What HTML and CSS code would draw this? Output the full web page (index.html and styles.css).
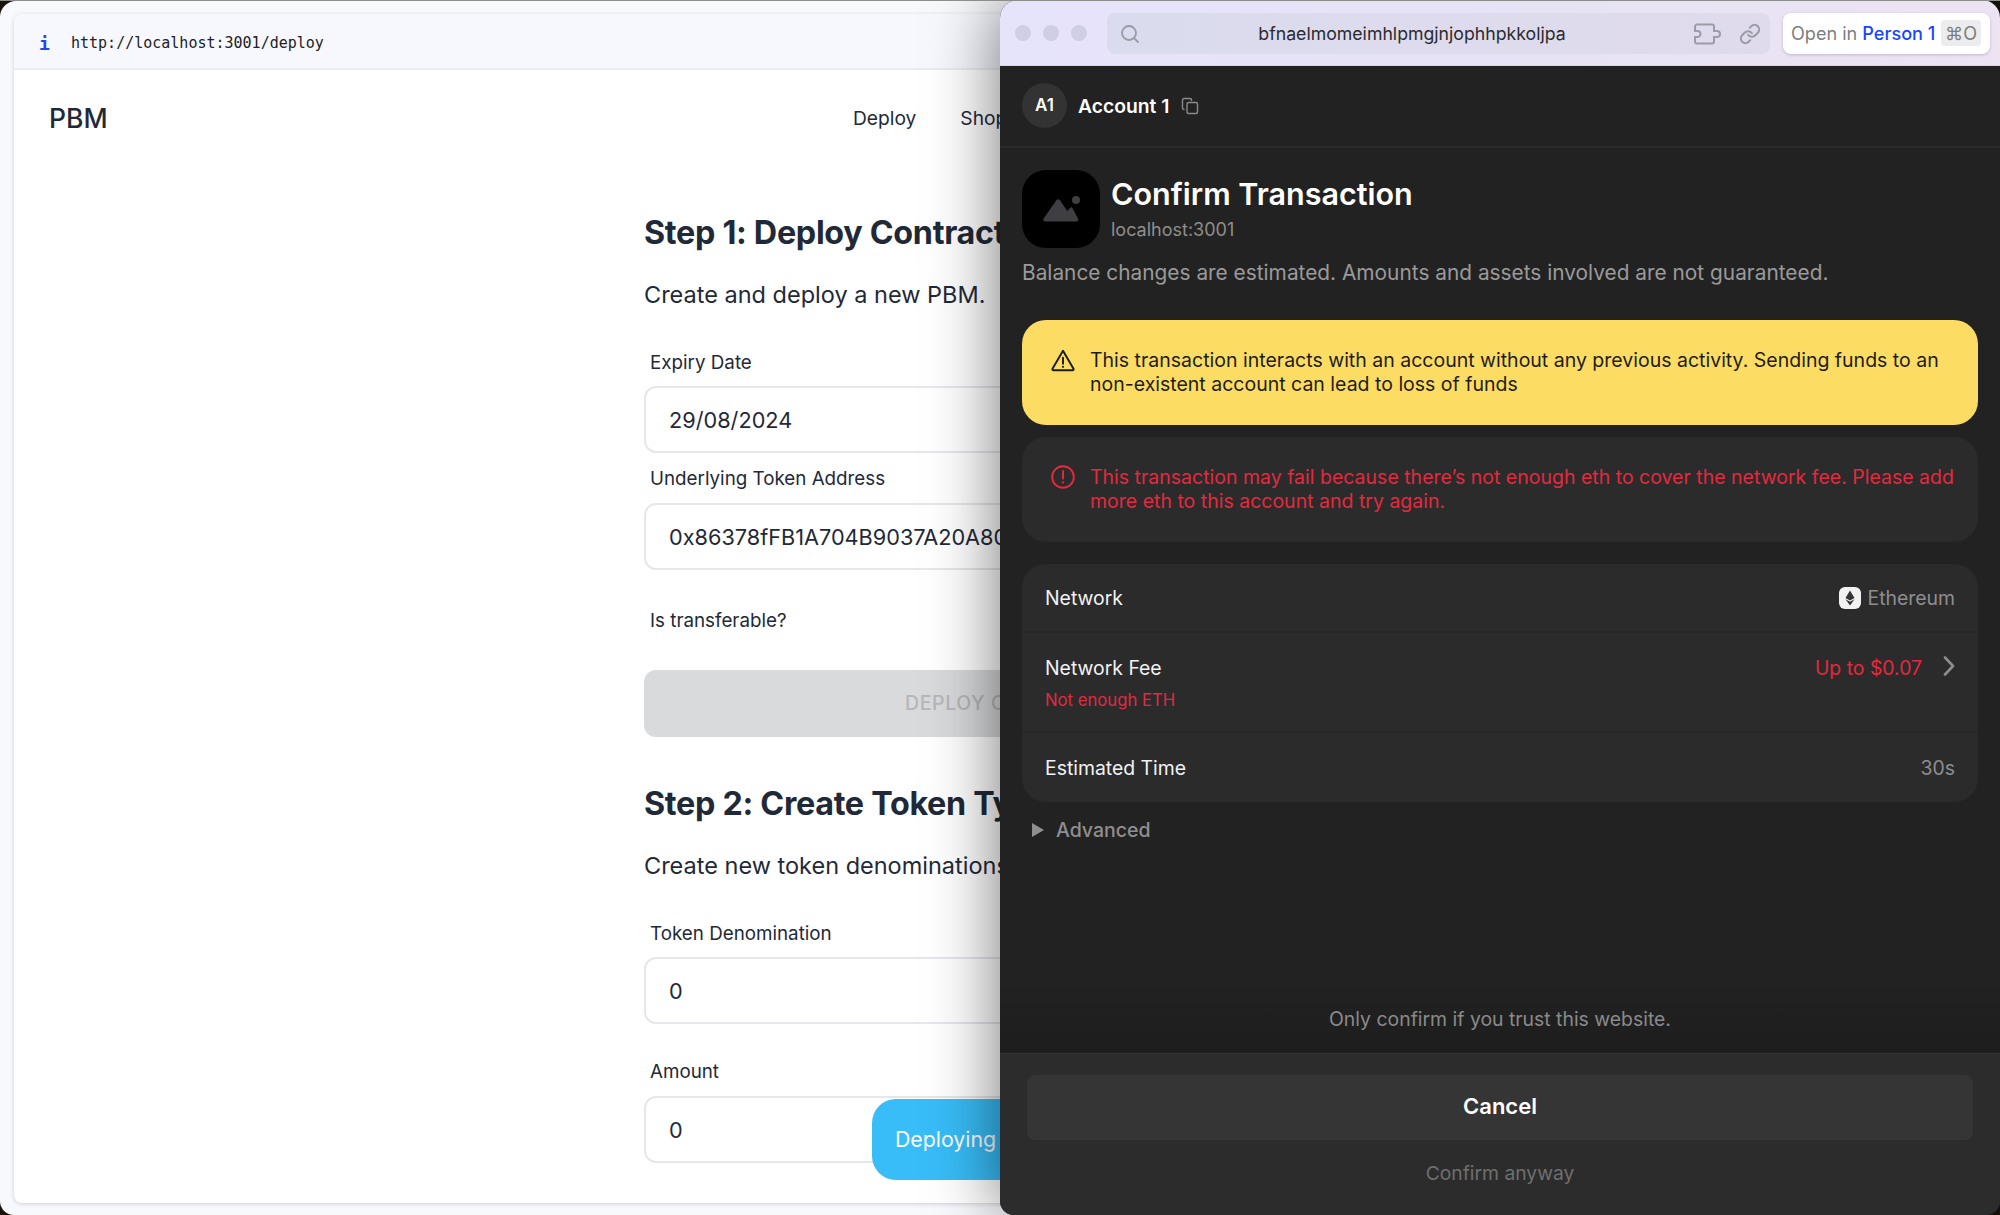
FILE: index.html
```html
<!DOCTYPE html>
<html lang="en">
<head>
<meta charset="utf-8">
<title>PBM Deploy</title>
<link rel="stylesheet" href="styles.css">
</head>
<body>
<div class="desktop">
  <section class="site-window">
    <div class="site-panel">
      <div class="url-bar"><span class="url-i">i</span><span class="url-text">http://localhost:3001/deploy</span></div>
      <nav class="site-nav">
        <span class="brand">PBM</span>
        <div class="nav-links"><a>Deploy</a><a>Shop</a></div>
      </nav>
      <main class="site-main">
        <h2 class="step-title">Step 1: Deploy Contract</h2>
        <p class="step-desc">Create and deploy a new PBM.</p>
        <label class="field-label first">Expiry Date</label>
        <div class="field">29/08/2024</div>
        <label class="field-label tight">Underlying Token Address</label>
        <div class="field">0x86378fFB1A704B9037A20A80C0C9F4F9C2A1E3D7</div>
        <label class="field-label switch">Is transferable?</label>
        <div class="deploy-btn"><span>DEPLOY CONTRACT</span></div>
        <h2 class="step-title second">Step 2: Create Token Type</h2>
        <p class="step-desc">Create new token denominations.</p>
        <label class="field-label first">Token Denomination</label>
        <div class="field">0</div>
        <label class="field-label">Amount</label>
        <div class="field">0</div>
      </main>
      <div class="toast">Deploying contract</div>
    </div>
  </section>

  <section class="wallet-window">
    <header class="title-bar">
      <div class="lights"><i></i><i></i><i></i></div>
      <div class="address-box">
        <svg class="addr-search" viewBox="0 0 20 20" width="20" height="20"><circle cx="9" cy="9" r="7" fill="none" stroke="#9a9aa8" stroke-width="1.8"/><path d="M14 14l4 4" stroke="#9a9aa8" stroke-width="1.8" stroke-linecap="round"/></svg>
        <span class="addr-text">bfnaelmomeimhlpmgjnjophhpkkoljpa</span>
        <svg class="addr-icon" viewBox="0 0 28 22" width="28" height="22"><path d="M3 1.500h15a2 2 0 0 1 2 2v4.500h3a3 3 0 0 1 0 6h-3v4.500a2 2 0 0 1-2 2H3a2 2 0 0 1-2-2V14h2.500a3 3 0 0 0 0-6H1V3.500a2 2 0 0 1 2-2z" fill="none" stroke="#9c9ca8" stroke-width="2"/></svg>
        <svg class="addr-icon link" viewBox="0 0 24 24" width="22" height="22"><path d="M10 13a5 5 0 0 0 7.540.540l3-3a5 5 0 0 0-7.070-7.070l-1.720 1.710" fill="none" stroke="#9c9ca8" stroke-width="2.300" stroke-linecap="round" stroke-linejoin="round"/><path d="M14 11a5 5 0 0 0-7.540-.540l-3 3a5 5 0 0 0 7.070 7.070l1.710-1.710" fill="none" stroke="#9c9ca8" stroke-width="2.300" stroke-linecap="round" stroke-linejoin="round"/></svg>
      </div>
      <div class="open-in"><span class="open-grey">Open in</span><span class="open-blue">Person 1</span><kbd>⌘O</kbd></div>
    </header>

    <div class="account-row">
      <span class="avatar">A1</span>
      <span class="account-name">Account 1</span>
      <svg viewBox="0 0 18 18" width="18" height="18"><path d="M3.500 12.500h-.5a1.500 1.500 0 0 1-1.500-1.500V3a1.500 1.500 0 0 1 1.500-1.500h6a1.500 1.500 0 0 1 1.500 1.500v1" fill="none" stroke="#8a8a8a" stroke-width="1.400"/><rect x="6" y="5.500" width="10.500" height="11" rx="1.500" fill="none" stroke="#8a8a8a" stroke-width="1.400"/></svg>
    </div>

    <div class="wallet-body">
      <div class="tx-head">
        <div class="app-icon">
          <svg viewBox="0 0 78 78" width="78" height="78"><path d="M23 51.500a1.800 1.800 0 0 1-1.500-2.800L34.500 30a2 2 0 0 1 3.300 0l7.500 11 2.500-2.800a1.800 1.800 0 0 1 2.800 0l5.500 10.500a1.800 1.800 0 0 1-1.500 2.800z" fill="#3f3f43"/><circle cx="54" cy="30" r="4" fill="#3f3f43"/></svg>
        </div>
        <div class="tx-titles">
          <h1>Confirm Transaction</h1>
          <span>localhost:3001</span>
        </div>
      </div>
      <p class="balance-note">Balance changes are estimated. Amounts and assets involved are not guaranteed.</p>

      <div class="notice warn">
        <svg viewBox="0 0 24 24" width="26" height="26"><path d="M12 3.500L2.300 20a1 1 0 0 0 .9 1.500h17.600a1 1 0 0 0 .9-1.500z" fill="none" stroke="#1d1d1d" stroke-width="1.800" stroke-linejoin="round"/><path d="M12 10v5.500" stroke="#1d1d1d" stroke-width="1.800" stroke-linecap="round"/><circle cx="12" cy="18.300" r="1" fill="#1d1d1d"/></svg>
        <p>This transaction interacts with an account without any previous activity. Sending funds to an non-existent account can lead to loss of funds</p>
      </div>
      <div class="notice danger">
        <svg viewBox="0 0 24 24" width="26" height="26"><circle cx="12" cy="12" r="10" fill="none" stroke="#e3293f" stroke-width="1.800"/><path d="M12 6.500v7" stroke="#e3293f" stroke-width="1.800" stroke-linecap="round"/><circle cx="12" cy="17" r="1" fill="#e3293f"/></svg>
        <p>This transaction may fail because there’s not enough eth to cover the network fee. Please add more eth to this account and try again.</p>
      </div>

      <div class="details">
        <div class="detail-row network">
          <span class="label">Network</span>
          <span class="value"><svg viewBox="0 0 22 22" width="22" height="22"><rect width="22" height="22" rx="6" fill="#f2f2f2"/><path d="M11 3.500l4.500 7.500-4.500 2.600-4.500-2.600z" fill="#333"/><path d="M11 14.800l4.500-2.600-4.500 6.300-4.500-6.300z" fill="#333"/></svg>Ethereum</span>
        </div>
        <div class="detail-row fee">
          <div class="fee-left"><span class="label">Network Fee</span><small>Not enough ETH</small></div>
          <span class="value red">Up to $0.07<svg viewBox="0 0 12 20" width="12" height="20"><path d="M2 1.500l8 8.500-8 8.500" fill="none" stroke="#8c8c8c" stroke-width="2.600" stroke-linecap="round" stroke-linejoin="round"/></svg></span>
        </div>
        <div class="detail-row time">
          <span class="label">Estimated Time</span>
          <span class="value">30s</span>
        </div>
      </div>

      <div class="advanced"><svg viewBox="0 0 12 14" width="12" height="14"><path d="M0 0l12 7-12 7z" fill="#8f8f8f"/></svg>Advanced</div>
      <p class="trust">Only confirm if you trust this website.</p>
    </div>

    <footer class="wallet-footer">
      <div class="cancel">Cancel</div>
      <div class="confirm">Confirm anyway</div>
    </footer>
  </section>
</div>
</body>
</html>
```
FILE: styles.css
```css
* { box-sizing: border-box; }
html, body { margin: 0; padding: 0; }
body {
  width: 2000px;
  height: 1215px;
  overflow: hidden;
  background: #1a1408;
  font-family: Inter, "Noto Sans", sans-serif;
}
.desktop {
  position: relative;
  width: 2000px;
  height: 1215px;
  overflow: hidden;
  border-top: 1px solid #8d8d8d;
}

/* left browser window */
.site-window {
  width: 1040px;
  height: 1214px;
  background: #f8f9fd;
  border-radius: 16px 0 0 14px;
  padding: 13px 0 12px 14px;
}
.site-panel {
  position: relative;
  height: 1189px;
  background: #fff;
  border-radius: 8px 0 0 8px;
  box-shadow: 0 1px 4px rgba(60, 70, 90, .22);
  overflow: hidden;
}
.url-bar {
  height: 56px;
  display: flex;
  align-items: center;
  gap: 22px;
  padding: 5px 0 0 25px;
  background: #f6f8fe;
  border-bottom: 2px solid #e9ecf3;
  font: 15px/1 "DejaVu Sans Mono", monospace;
  color: #222;
}
.url-i { color: #1f45f5; font-weight: 700; font-size: 18px; width: 10px; }
.site-nav {
  height: 96px;
  display: flex;
  align-items: center;
  padding: 0 0 0 35px;
  color: #1f2937;
}
.brand { font-size: 26.500px; font-weight: 500; width: 804px; }
.nav-links { display: flex; gap: 44px; font-size: 19.200px; }
.site-main {
  width: 1400px;
  padding: 0 0 0 630px;
  margin-top: 45px;
  white-space: nowrap;
  color: #1f2937;
}
.step-title {
  margin: 0;
  height: 44px;
  font-size: 32.300px;
  line-height: 44px;
  font-weight: 700;
  letter-spacing: -.3px;
}
.step-title.second { margin-top: 45px; }
.step-desc {
  margin: 26px 0 0;
  height: 28px;
  font-size: 23.500px;
  line-height: 28px;
}
.field-label {
  display: block;
  margin: 36px 0 12px 6px;
  height: 24px;
  font-size: 18.800px;
  line-height: 24px;
}
.field-label.first { margin: 42px 0 11px 6px; }
.field-label.tight { margin-top: 14px; }
.field-label.switch { margin: 39px 0 37px 6px; }
.field {
  width: 640px;
  height: 67px;
  padding: 0 23px;
  border: 2px solid #e5e7eb;
  border-radius: 12px;
  background: #fff;
  font-size: 21.700px;
  line-height: 65px;
}
.deploy-btn {
  width: 640px;
  height: 67px;
  border-radius: 12px;
  background: #d9dadc;
  color: #b5b7ba;
  font-size: 19.500px;
  font-weight: 500;
  line-height: 67px;
  letter-spacing: .6px;
  padding-left: 261px;
}
.toast {
  position: absolute;
  left: 858px;
  top: 1085px;
  width: 300px;
  height: 81px;
  padding: 0 0 0 23px;
  border-radius: 24px;
  background: #38bdf8;
  color: #fff;
  font-size: 21.300px;
  line-height: 81px;
  white-space: nowrap;
}

/* extension popup */
.wallet-window {
  position: absolute;
  left: 1000px;
  top: -1px;
  width: 1000px;
  height: 1215px;
  display: flex;
  flex-direction: column;
  background: #222;
  border-radius: 18px 18px 14px 14px;
  overflow: hidden;
  box-shadow: 0 0 70px rgba(0, 0, 0, .55);
}
.title-bar {
  height: 66px;
  flex: none;
  display: flex;
  align-items: flex-start;
  padding: 13px 10px 0 14px;
  background: linear-gradient(90deg, #e6e4fb 0%, #e6e3f6 50%, #ede3f2 100%);
  border-bottom: 1px solid #d9d7e6;
}
.lights { display: flex; gap: 12px; padding: 12px 0 0 1px; width: 93px; }
.lights i { width: 16px; height: 16px; border-radius: 50%; background: #cfcee4; }
.address-box {
  width: 663px;
  height: 41px;
  display: flex;
  align-items: center;
  padding: 0 9px 0 13px;
  background: linear-gradient(90deg, #dbdbef, #e0dbec);
  border-radius: 8px;
}
.addr-text {
  flex: 1;
  text-align: center;
  font-size: 17.700px;
  color: #2a2a2e;
}
.addr-icon { flex: none; margin-left: 10px; }
.addr-icon.link { margin-left: 17px; }
.open-in {
  margin-left: 13px;
  width: 207px;
  height: 41px;
  display: flex;
  align-items: center;
  padding: 0 9px 2px 8px;
  background: #fff;
  border-radius: 8px;
  box-shadow: 0 1px 3px rgba(60, 50, 90, .25);
  font-size: 18.100px;
  white-space: nowrap;
}
.open-grey { color: #7d7d7d; }
.open-blue { color: #1746ff; font-weight: 500; margin-left: 5px; }
kbd {
  margin-left: auto;
  padding: 2px 4px;
  border-radius: 4px;
  background: #ececee;
  color: #7d7d7d;
  font: inherit;
}
.account-row {
  height: 82px;
  flex: none;
  display: flex;
  align-items: center;
  padding: 0 0 1px 22px;
  border-bottom: 2px solid #2a2a2a;
  color: #fff;
}
.avatar {
  width: 45px;
  height: 45px;
  border-radius: 50%;
  background: #333;
  text-align: center;
  font-size: 17px;
  font-weight: 600;
  line-height: 45px;
}
.account-name { margin: 0 12px 0 11px; font-size: 19.300px; font-weight: 600; }
.wallet-body {
  flex: 1;
  padding: 22px 22px 0;
  display: flex;
  flex-direction: column;
  background: linear-gradient(180deg, #222 92%, #1d1d1d 100%);
}
.tx-head { display: flex; gap: 11px; height: 78px; }
.app-icon { width: 78px; height: 78px; border-radius: 24px; background: #000; }
.tx-titles { display: flex; flex-direction: column; }
.tx-titles h1 {
  margin: 6px 0 0;
  font-size: 30.500px;
  line-height: 36px;
  font-weight: 600;
  color: #fff;
}
.tx-titles span { margin-top: 6px; font-size: 18px; line-height: 24px; color: #8e8e8e; }
.balance-note {
  margin: 11px 0 0;
  font-size: 20.850px;
  line-height: 28px;
  color: #9a9a9a;
  white-space: nowrap;
}
.notice {
  height: 105px;
  display: flex;
  align-items: flex-start;
  gap: 14px;
  padding: 29px 24px 0 28px;
  border-radius: 24px;
}
.notice svg { flex: none; margin-top: -2px; }
.notice p { margin: 0; font-size: 19.500px; line-height: 23.600px; }
.warn { margin-top: 33px; background: #fcdc62; color: #1d1d1d; }
.danger { margin-top: 12px; background: #2b2b2b; color: #e3293f; }
.details {
  margin-top: 22px;
  height: 238px;
  border-radius: 24px;
  background: #2b2b2b;
  overflow: hidden;
}
.detail-row {
  display: flex;
  justify-content: space-between;
  padding: 0 23px;
  font-size: 19.400px;
  color: #f2f2f2;
}
.detail-row.network { height: 69px; align-items: center; border-bottom: 2px solid #262626; }
.detail-row.fee { height: 100px; padding-top: 23px; border-bottom: 2px solid #262626; }
.detail-row.time { height: 69px; align-items: center; }
.fee-left { display: flex; flex-direction: column; gap: 9px; }
.fee-left small { font-size: 16.700px; line-height: 22px; color: #e3293f; }
.label { line-height: 24px; }
.value { display: flex; align-items: center; gap: 6px; color: #8e8e8e; line-height: 24px; }
.value.red { color: #e3293f; gap: 21px; height: 24px; }
.value.red svg { margin-top: -5px; }
.advanced {
  display: flex;
  align-items: center;
  gap: 12px;
  margin: 16px 0 0 10px;
  font-size: 19.500px;
  font-weight: 500;
  line-height: 24px;
  color: #8f8f8f;
}
.trust {
  margin: auto 0 22px;
  text-align: center;
  font-size: 19.400px;
  line-height: 24px;
  color: #8a8a8a;
}
.wallet-footer {
  height: 162px;
  flex: none;
  padding: 21px 27px 0;
  background: #2c2c2c;
  border-top: 1px solid #333;
}
.cancel {
  height: 65px;
  border-radius: 8px;
  background: #353535;
  text-align: center;
  color: #fff;
  font-size: 22px;
  font-weight: 600;
  line-height: 63px;
}
.confirm {
  margin-top: 21px;
  text-align: center;
  font-size: 19.300px;
  line-height: 24px;
  color: #6f6f6f;
}
```
